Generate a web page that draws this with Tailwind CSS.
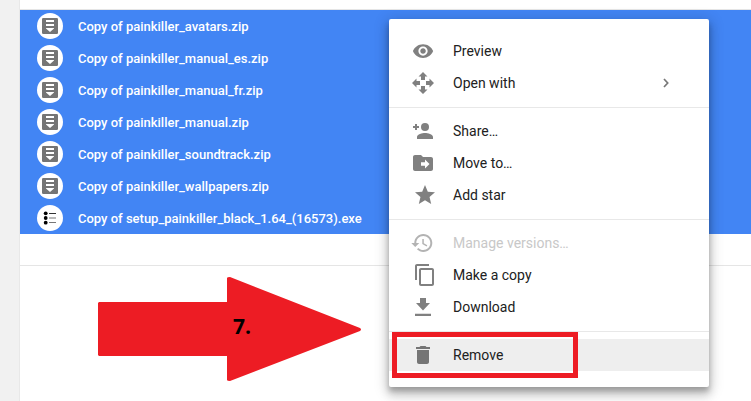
<!DOCTYPE html>
<html lang="en">
<head>
<meta charset="utf-8">
<title>Files</title>
<script src="https://cdn.jsdelivr.net/npm/@tailwindcss/browser@4"></script>
</head>
<body class="relative flex h-[401px] w-[751px] overflow-hidden bg-white font-['Roboto',sans-serif]">
<svg class="hidden">
  <symbol id="zip" viewBox="0 0 16 16"><rect width="16" height="16" rx="1.300" fill="#757575"/><path fill="#fff" d="M4 2h8v2H4zM4 6h8v2H4zM4 10h8v.500L8 14 4 10.500z"/></symbol>
</svg>
<aside class="w-5 shrink-0 border-r border-[#e8e8e8] bg-[#f1f1f1]"></aside>
<main class="flex-1">
  <div class="h-2.5 border-b border-[#e5e5e5]"></div>
  <ul class="bg-[#4285f4] text-[13px] font-medium text-white">
    <li class="flex h-8 items-center gap-[15px] pl-[17px]"><span class="flex size-[26px] items-center justify-center rounded-full bg-white"><svg class="size-4"><use href="#zip"/></svg></span><span class="pt-px">Copy of painkiller_avatars.zip</span></li>
    <li class="flex h-8 items-center gap-[15px] pl-[17px]"><span class="flex size-[26px] items-center justify-center rounded-full bg-white"><svg class="size-4"><use href="#zip"/></svg></span><span class="pt-px">Copy of painkiller_manual_es.zip</span></li>
    <li class="flex h-8 items-center gap-[15px] pl-[17px]"><span class="flex size-[26px] items-center justify-center rounded-full bg-white"><svg class="size-4"><use href="#zip"/></svg></span><span class="pt-px">Copy of painkiller_manual_fr.zip</span></li>
    <li class="flex h-8 items-center gap-[15px] pl-[17px]"><span class="flex size-[26px] items-center justify-center rounded-full bg-white"><svg class="size-4"><use href="#zip"/></svg></span><span class="pt-px">Copy of painkiller_manual.zip</span></li>
    <li class="flex h-8 items-center gap-[15px] pl-[17px]"><span class="flex size-[26px] items-center justify-center rounded-full bg-white"><svg class="size-4"><use href="#zip"/></svg></span><span class="pt-px">Copy of painkiller_soundtrack.zip</span></li>
    <li class="flex h-8 items-center gap-[15px] pl-[17px]"><span class="flex size-[26px] items-center justify-center rounded-full bg-white"><svg class="size-4"><use href="#zip"/></svg></span><span class="pt-px">Copy of painkiller_wallpapers.zip</span></li>
    <li class="flex h-8 items-center gap-[15px] pl-[17px]"><span class="flex size-[26px] items-center justify-center rounded-full bg-white"><svg class="size-4" viewBox="0 0 16 16"><circle cx="3.700" cy="3.300" r="1.900"/><circle cx="3.700" cy="8" r="1.900"/><circle cx="3.700" cy="12.700" r="1.900"/><path d="M7 3h7v1H7z" fill="#333"/><path d="M7 7.500h7v1H7zM7 12h7v1H7z" fill="#777"/></svg></span><span class="pt-px">Copy of setup_painkiller_black_1.64_(16573).exe</span></li>
  </ul>
  <div class="h-8 border-b border-[#e5e5e5]"></div>
</main>

<!-- step arrow -->
<div class="absolute left-[98px] top-[276px] h-[106px] w-[264px]">
  <svg class="absolute inset-0" width="264" height="106" viewBox="0 0 264 106"><path fill="#ed1c24" d="M1 26H129V2Q129 1 132 1L262 52Q264 53.500 262 55L132 105Q129 105 129 104V80H1L0 79V27z"/></svg>
  <span class="absolute left-[135px] top-[37px] font-['Open_Sans',sans-serif] text-[21px] leading-[27px] font-bold text-black">7.</span>
</div>

<!-- context menu -->
<div class="absolute left-[389px] top-[19px] flex h-[368px] w-[320px] flex-col rounded-[2px] bg-white py-4 text-[14px] text-[#212121] shadow-[0_8px_10px_1px_rgba(0,0,0,0.14),0_3px_14px_3px_rgba(0,0,0,0.14),0_4px_5px_0_rgba(0,0,0,0.2)]">
  <div class="flex h-8 items-center gap-[18px] pl-[22px]"><svg class="h-6 w-6" viewBox="0 0 24 24" fill="#808080"><g transform="translate(1 1) scale(.92)"><path d="M12 4.500C7 4.500 2.730 7.610 1 12c1.730 4.390 6 7.500 11 7.500s9.270-3.110 11-7.500c-1.730-4.390-6-7.500-11-7.500zM12 17c-2.760 0-5-2.240-5-5s2.240-5 5-5 5 2.240 5 5-2.240 5-5 5zm0-8c-1.660 0-3 1.340-3 3s1.340 3 3 3 3-1.340 3-3-1.340-3-3-3z"/></g></svg><span>Preview</span></div>
  <div class="flex h-8 items-center gap-[18px] pl-[22px] pr-[31px]"><svg class="h-6 w-6" viewBox="0 0 24 24" fill="#808080"><path d="M12 1l4.500 4.500H14V9h-4V5.500H7.500zM12 23l-4.500-4.500H10V15h4v3.500h2.500zM1 12l4.500-4.500V10H9v4H5.500v2.500zM23 12l-4.500 4.500V14H15v-4h3.500V7.500z"/></svg><span class="flex-1">Open with</span><svg class="h-6 w-6" viewBox="0 0 24 24" fill="none" stroke="#777" stroke-width="1.700"><path d="M10 8l3.700 4-3.700 4"/></svg></div>
  <div class="my-2 -mb-px h-px bg-[#e8e8e8]"></div>
  <div class="mt-2 flex h-8 items-center gap-[18px] pl-[22px]"><svg class="h-6 w-6" viewBox="0 0 24 24" fill="#808080"><circle cx="14" cy="8" r="4"/><path d="M14 14c-2.670 0-8 1.340-8 4v2h16v-2c0-2.660-5.330-4-8-4zM4 5h2v2h2v2H6v2H4V9H2V7h2z"/></svg><span>Share…</span></div>
  <div class="flex h-8 items-center gap-[18px] pl-[22px]"><svg class="h-6 w-6" viewBox="0 0 24 24" fill="#808080"><path d="M20 6h-8l-2-2H4c-1.100 0-2 .900-2 2v12c0 1.100.900 2 2 2h16c1.100 0 2-.900 2-2V8c0-1.100-.900-2-2-2zm-6 11.500v-2.700h-4v-3.600h4V8.500l4.500 4.500-4.500 4.500z"/></svg><span>Move to…</span></div>
  <div class="flex h-8 items-center gap-[16px] pl-[24px]"><svg class="h-6 w-6" viewBox="0 0 24 24" fill="#808080"><path d="M12 17.270L18.180 21l-1.640-7.030L22 9.240l-7.190-.610L12 2 9.190 8.630 2 9.240l5.460 4.730L5.820 21z"/></svg><span>Add star</span></div>
  <div class="my-2 -mb-px h-px bg-[#e8e8e8]"></div>
  <div class="mt-2 flex h-8 items-center gap-[18px] pl-[22px] text-[#c8c8c8]"><svg class="h-6 w-6" viewBox="0 0 24 24" fill="#b3b3b3"><path transform="translate(-.7 0)" d="M13 3c-4.970 0-9 4.030-9 9H1l3.890 3.890.070.140L9 12H6c0-3.870 3.130-7 7-7s7 3.130 7 7-3.130 7-7 7c-1.930 0-3.680-.790-4.940-2.060l-1.420 1.420C8.270 19.990 10.510 21 13 21c4.970 0 9-4.030 9-9s-4.030-9-9-9zm-1 5v5l4.280 2.540.720-1.210-3.500-2.080V8H12z"/></svg><span>Manage versions…</span></div>
  <div class="flex h-8 items-center gap-[16px] pl-[24px]"><svg class="h-6 w-6" viewBox="0 0 24 24" fill="#808080"><path d="M16 1H4c-1.100 0-2 .900-2 2v14h2V3h12V1zm3 4H8c-1.100 0-2 .900-2 2v14c0 1.100.900 2 2 2h11c1.100 0 2-.900 2-2V7c0-1.100-.900-2-2-2zm0 16H8V7h11v14z"/></svg><span>Make a copy</span></div>
  <div class="flex h-8 items-center gap-[18px] pl-[22px]"><svg class="h-6 w-6" viewBox="0 0 24 24" fill="#808080"><path d="M9 3h6v5h4l-7 7.500L5 8h4zM4 18.700h16V21H4z"/></svg><span>Download</span></div>
  <div class="my-2 -mb-px h-px bg-[#e8e8e8]"></div>
  <div class="mt-2 flex h-8 items-center gap-[18px] bg-[#eee] pl-[22px]"><svg class="h-6 w-6" viewBox="0 0 24 24" fill="#757575"><path d="M6 19c0 1.100.900 2 2 2h8c1.100 0 2-.900 2-2V7H6v12zM19 4h-3.500l-1-1h-5l-1 1H5v2h14V4z"/></svg><span>Remove</span></div>
</div>

<!-- highlight around the last menu item -->
<div class="absolute left-[392px] top-[332px] h-[46px] w-[186px] border-[5px] border-[#ed1c24]"></div>
</body>
</html>
